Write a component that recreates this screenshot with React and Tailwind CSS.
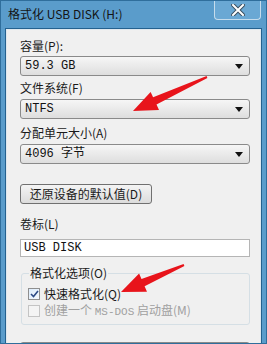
import React from 'react'

const cjk = { fontFamily: '"Noto Sans CJK SC", "Liberation Sans", sans-serif' }
const mono = { fontFamily: '"Liberation Mono", "Noto Sans CJK SC", monospace' }

// tapered red annotation arrow, tail -> tip
function arrowPoints(tx, ty, hx, hy) {
  const dx = hx - tx
  const dy = hy - ty
  const len = Math.hypot(dx, dy)
  const ux = dx / len
  const uy = dy / len
  const nx = -uy
  const ny = ux
  const headLen = 24
  const headW = 10
  const bx = hx - ux * headLen
  const by = hy - uy * headLen
  const pts = [
    [tx + nx * 1, ty + ny * 1],
    [bx + nx * 4, by + ny * 4],
    [bx + nx * headW, by + ny * headW],
    [hx, hy],
    [bx - nx * headW, by - ny * headW],
    [bx - nx * 4, by - ny * 4],
    [tx - nx * 1, ty - ny * 1],
  ]
  return pts.map((p) => p.map((v) => v.toFixed(1)).join(',')).join(' ')
}

function Select({ value, font }) {
  return (
    <div className="h-[20px] w-[230px] flex items-center justify-between rounded-[3px] border border-[#8a8a8a] bg-gradient-to-b from-[#f6f6f6] to-[#dedede] pl-[4px] pr-[6px]">
      <span className="text-[12px] leading-none text-[#111]" style={font}>
        {value}
      </span>
      <svg width="8" height="5" viewBox="0 0 8 5">
        <polygon points="0,0 8,0 4,5" fill="#111" />
      </svg>
    </div>
  )
}

function Label({ children }) {
  return (
    <div className="h-[16px] flex items-center text-[12px] text-[#1a1a1a] leading-none" style={cjk}>
      {children}
    </div>
  )
}

export default function App() {
  return (
    <div className="relative w-[267px] h-[344px] overflow-hidden bg-[#5a9ccb] border border-[#2f6e9c] flex flex-col">
      <div className="h-[27px] flex items-start shrink-0">
        <div className="pl-[7px] pt-[7px] text-[12px] leading-none text-[#141414]" style={cjk}>
          格式化 USB DISK (H:)
        </div>
        <div className="ml-auto mr-[5px] w-[47px] h-[19px] rounded-b-[4px] border border-t-0 border-[#c6dcec] bg-[#6aa8d4] flex items-center justify-center">
          <svg width="14" height="12" viewBox="0 0 14 12">
            <path d="M2 1 L12 11 M12 1 L2 11" stroke="#3a4f60" strokeWidth="4" strokeLinecap="square" />
            <path d="M2 1 L12 11 M12 1 L2 11" stroke="#ffffff" strokeWidth="2" strokeLinecap="square" />
          </svg>
        </div>
      </div>

      <div className="mx-[4px] flex-1 border border-[#24618f] border-b-0">
        <div className="h-full border border-[#dfe8ef] border-b-0 bg-[#f0f0f0] pl-[13px] pt-[8px]">
          <Label>容量(P):</Label>
          <div className="mt-[2px]">
            <Select value="59.3 GB" font={mono} />
          </div>

          <div className="mt-[4px]">
            <Label>文件系统(F)</Label>
          </div>
          <div className="mt-[3px]">
            <Select value="NTFS" font={mono} />
          </div>

          <div className="mt-[6px]">
            <Label>分配单元大小(A)</Label>
          </div>
          <div className="mt-[3px]">
            <Select value="4096 字节" font={mono} />
          </div>

          <div className="mt-[20px] w-[132px] h-[20px] rounded-[3px] border border-[#707070] bg-gradient-to-b from-[#f4f4f4] to-[#dcdcdc] flex items-center justify-center text-[12px] leading-none text-[#1a1a1a]" style={cjk}>
            还原设备的默认值(D)
          </div>

          <div className="mt-[12px]">
            <Label>卷标(L)</Label>
          </div>
          <div className="mt-[7px] w-[230px] h-[18px] border border-[#b5b5b5] bg-white flex items-center pl-[3px] text-[12px] leading-none text-[#111]" style={mono}>
            USB DISK
          </div>

          <div className="relative mt-[16px] w-[229px] ml-[1px] rounded-[3px] border border-[#d5dfe5] pt-[14px] pb-[7px] pl-[6px]">
            <div className="absolute -top-[9px] left-[7px] bg-[#f0f0f0] px-[1px] text-[12px] leading-[16px] text-[#1a1a1a]" style={cjk}>
              格式化选项(O)
            </div>
            <div className="flex items-center gap-[4px] h-[12px]">
              <div className="w-[12px] h-[12px] border border-[#8f8f8f] bg-gradient-to-br from-[#dcecfc] to-[#f4f8fd] flex items-center justify-center">
                <svg width="9" height="8" viewBox="0 0 9 8">
                  <path d="M1 4 L3.5 6.5 L8 1" stroke="#2b4a86" strokeWidth="1.6" fill="none" />
                </svg>
              </div>
              <span className="text-[12px] leading-none text-[#1a1a1a]" style={cjk}>
                快速格式化(Q)
              </span>
            </div>
            <div className="mt-[5px] flex items-center gap-[4px] h-[12px]">
              <div className="w-[12px] h-[12px] border border-[#c4c4c4] bg-[#f4f4f4]" />
              <span className="text-[12px] leading-none text-[#a0a0a0]" style={cjk}>
                创建一个 <span style={mono} className="text-[11px]">MS-DOS</span> 启动盘(M)
              </span>
            </div>
          </div>

          <div className="mt-[17px] w-[230px] h-[20px] rounded-[3px] border border-[#8a8a8a] bg-gradient-to-b from-[#f4f4f4] to-[#dcdcdc]" />
        </div>
      </div>

      <svg className="absolute left-0 top-0 pointer-events-none" width="267" height="344">
        <polygon points={arrowPoints(206, 76, 132, 110)} fill="#e8141b" />
        <polygon points={arrowPoints(183, 264, 120, 291)} fill="#e8141b" />
      </svg>
    </div>
  )
}
